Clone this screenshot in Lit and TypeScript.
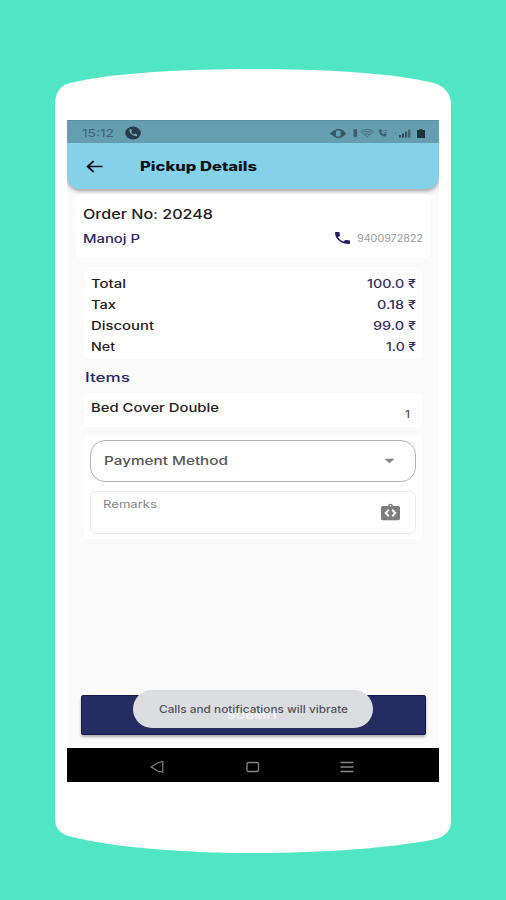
import { LitElement, html, svg, css } from "lit";
import { customElement, property } from "lit/decorators.js";

/** One line of text stretched to an exact width; its baseline sits 15px down a 20px line. */
@customElement("wide-text")
class WideText extends LitElement {
  @property() text = "";
  @property({ type: Number }) width = 100;
  static styles = css`
    :host { display: block; flex: none; }
    svg { display: block; overflow: visible; }
    text { fill: currentColor; }
  `;
  render() {
    return html`<svg width=${this.width} height="20">
      ${svg`<text x="0" y="15" textLength=${this.width} lengthAdjust="spacingAndGlyphs">${this.text}</text>`}
    </svg>`;
  }
}

@customElement("app-root")
class AppRoot extends LitElement {
  static styles = css`
    :host { display: block; width: 506px; height: 900px; background: #50e5c3; overflow: hidden;
      font-family: Inter, "Noto Sans", sans-serif; position: relative; }
    * { box-sizing: border-box; }
    svg { display: block; flex: none; }
    .frame { position: absolute; left: 0; top: 0; }
    .phone { position: relative; padding: 120px 67px 118px; height: 900px; }
    .screen { width: 372px; height: 662px; background: #fafafa; display: flex; flex-direction: column; }
    .bars { box-shadow: 0 2px 4px rgba(0,0,0,.38); border-radius: 0 0 13px 13px; overflow: hidden; background: #86d1ea; height: 69px; flex: none; clip-path: inset(0 0 -8px 0); }
    .status { height: 23px; background: #659eb1; border-top: 1px solid #5791a5; display: flex; padding-left: 15px; color: #41636f; font-size: 11px; }
    .status .clock { margin-top: 1px; }
    .status .call { margin: 4px 0 0 11px; }
    .status .icons { margin: 5px 0 0 189px; }
    .appbar { height: 46px; display: flex; padding: 13px 0 0 18px; color: #0a1216; font-size: 12.5px; font-weight: 800; }
    .appbar wide-text { margin: 0 0 0 35px; }
    .card { background: #fff; border-radius: 5px; flex: none; }
    .order { margin: 5px 8px 0 9px; height: 64px; padding: 10px 8px 0 7px; font-size: 13px; font-weight: 500; color: #202020; }
    .line { display: flex; justify-content: space-between; }
    .contact { margin-top: 4px; font-size: 11.5px; color: #27266a; }
    .tel { display: flex; }
    .tel svg { margin: 4px 7px 0 0; }
    .tel wide-text { font-size: 10px; font-weight: 400; color: #999; margin-top: -1px; }
    .totals { margin: 13px 16px 0 17px; height: 88px; padding: 2px 7px 0; }
    .totals .line { height: 20.9px; font-size: 11.5px; font-weight: 500; color: #222; }
    .totals .amount { color: #303066; }
    .items { margin: 8px 0 0 18px; font-size: 12.5px; font-weight: 500; color: #27266a; }
    .item { margin: 6px 17px 0 17px; height: 34px; padding: 4px 12px 0 7px; font-size: 12px; font-weight: 500; color: #222; }
    .item .qty { margin-top: 6px; font-size: 11px; color: #555; }
    .form { margin: 9px 16px 0 17px; height: 103px; padding: 4px 7px 0 6px; }
    .select { height: 42px; border: 1px solid #b3b3b3; border-radius: 15px; padding: 9px 20px 0 13px; font-size: 12px; font-weight: 500; color: #555; }
    .select svg { margin-top: 8px; }
    .remarks { margin-top: 9px; height: 43px; border: 1px solid #ececec; border-radius: 6px; padding: 1px 15px 0 12px; font-size: 10.5px; color: #858585; }
    .remarks svg { margin-top: 9px; }
    .foot { margin: auto 13px 13px 14px; position: relative; }
    .submit { height: 40px; background: #252c61; border: 1px solid #18194f; border-radius: 2px; box-shadow: 0 2px 3px rgba(0,0,0,.3); }
    .toast { position: absolute; left: 52px; top: -5px; width: 240px; height: 38px; border-radius: 19px; background: #dcdde1; }
    .message { position: absolute; left: 78px; top: 3px; color: #50535a; font-size: 10.5px; font-weight: 500; }
    .ghost { position: absolute; left: 146px; top: 9px; color: rgba(255,255,255,.7); font-size: 11px; font-weight: 700; }
    .nav { height: 34px; background: #000; display: flex; padding: 12px 0 0 83px; flex: none; }
    .nav .home { margin-left: 81px; }
    .nav .menu { margin-left: 80px; }
  `;

  private totals: [string, number, string, number][] = [
    ["Total", 35, "100.0 ₹", 49],
    ["Tax", 25, "0.18 ₹", 39],
    ["Discount", 63, "99.0 ₹", 43],
    ["Net", 24, "1.0 ₹", 30],
  ];

  render() {
    return html`
      <svg class="frame" width="506" height="900">
        <path fill="#fff" d="M55 104C55 94 59 86 70 83C112 73 182 69 253 69C324 69 392 73 434 83C446 87 451 95 451 105V821C451 830 446 836 436 839C392 848 324 853 253 853C182 853 112 847 72 837C60 834 55 829 55 818Z"/>
      </svg>
      <div class="phone"><div class="screen">
        <div class="bars">
          <div class="status">
            <wide-text class="clock" text="15:12" width="32"></wide-text>
            <svg class="call" width="16" height="16" viewBox="0 0 16 16">
              <ellipse cx="8" cy="8" rx="7.8" ry="6.4" fill="#263e49"/>
              <path d="M4.400 4.200l1.800-.2.900 2-.9 1c.6 1.100 1.500 1.900 2.700 2.400l1.100-.9 2.100.8-.1 1.700c-4 .6-8.200-3-7.600-6.800z" fill="#75a3b2"/>
            </svg>
            <svg class="icons" width="97" height="15" viewBox="0 0 97 15" fill="#2d4b56">
              <path d="M0 7.500L4 4.200h1.200L6.500 3h4L12 4.200h1.200L16 7.500L13.200 10.800H12L10.500 12h-4L5.200 10.800H4z" opacity=".85"/>
              <rect x="6" y="4.600" width="4.600" height="5.800" rx="1" fill="#659eb1"/>
              <rect x="23.500" y="3" width="3.600" height="8" rx="1" opacity=".75"/>
              <path d="M31 5.500C34 2.800 40.500 2.800 43.300 5.500L37.200 11zM33.500 5.800h7.500M35 8h4.500" fill="none" stroke="#3b616f" stroke-width="1" opacity=".75"/>
              <path d="M49 3.700l2.200-.2.800 2-.9.800c.5.900 1.200 1.500 2.200 1.900l1-.8 2 .9-.1 2c-4.500.3-7.700-2.800-7.200-6.600zM53.300 4.500h4.200M55.500 3.200v4M53.500 6.500h4" stroke="#3b616f" stroke-width=".6" opacity=".75"/>
              <rect x="64.500" y="6" width="1.500" height="2" opacity=".3"/>
              <rect x="69" y="9" width="2" height="2.500"/><rect x="72" y="7.500" width="2" height="4"/>
              <rect x="75" y="5.500" width="2.200" height="6" opacity=".85"/><rect x="78" y="3.500" width="2.500" height="8" opacity=".65"/>
              <path d="M87 4h2V3.200h3.500V4H95v8h-8z" fill="#1c3540"/>
            </svg>
          </div>
          <div class="appbar">
            <svg width="20" height="20" viewBox="0 0 20 20"><path d="M17.500 10.500H3M8.700 5L2.500 10.500L8.700 16" fill="none" stroke="#0a1216" stroke-width="1.700"/></svg>
            <wide-text text="Pickup Details" width="117"></wide-text>
          </div>
        </div>

        <div class="card order">
          <wide-text text="Order No: 20248" width="130"></wide-text>
          <div class="line contact">
            <wide-text text="Manoj P" width="57"></wide-text>
            <div class="tel">
              <svg width="15" height="12" viewBox="3 3 18 18" preserveAspectRatio="none"><path fill="#201f66" d="M6.620 10.790c1.440 2.830 3.760 5.140 6.590 6.590l2.200-2.200c.27-.27.67-.36 1.020-.24 1.120.37 2.330.57 3.570.57.55 0 1 .45 1 1V20c0 .55-.45 1-1 1-9.390 0-17-7.610-17-17 0-.55.45-1 1-1h3.500c.55 0 1 .45 1 1 0 1.250.2 2.450.57 3.570.11.35.03.74-.25 1.020z"/></svg>
              <wide-text text="9400972822" width="66"></wide-text>
            </div>
          </div>
        </div>

        <div class="card totals">
          ${this.totals.map(([name, w, amount, aw]) => html`<div class="line">
            <wide-text text=${name} .width=${w}></wide-text>
            <wide-text class="amount" text=${amount} .width=${aw}></wide-text>
          </div>`)}
        </div>

        <wide-text class="items" text="Items" width="45"></wide-text>

        <div class="card item line">
          <wide-text text="Bed Cover Double" width="128"></wide-text>
          <wide-text class="qty" text="1" width="5"></wide-text>
        </div>

        <div class="card form">
          <div class="select line">
            <wide-text text="Payment Method" width="124"></wide-text>
            <svg width="11" height="6" viewBox="0 0 11 6"><path d="M.5 .8h10L5.500 5.200z" fill="#858585"/></svg>
          </div>
          <div class="remarks line">
            <wide-text text="Remarks" width="54"></wide-text>
            <svg width="19" height="19" viewBox="0 0 19 19">
              <path d="M2 4h5c.3-3 4.700-3 5 0h5c1.200 0 2 .6 2 1.600v11c0 1-.8 1.600-2 1.600H2c-1.200 0-2-.6-2-1.600v-11C0 4.600.8 4 2 4z" fill="#7d7d7d"/>
              <circle cx="9.500" cy="3.800" r=".8" fill="#fff"/>
              <path d="M7.800 7.800L4.800 11l3 3.200M11.200 7.800l3 3.200l-3 3.200" fill="none" stroke="#fff" stroke-width="2"/>
            </svg>
          </div>
        </div>

        <div class="foot">
          <div class="submit"></div>
          <div class="toast"></div>
          <wide-text class="ghost" text="SUBMIT" width="52"></wide-text>
          <wide-text class="message" text="Calls and notifications will vibrate" width="189"></wide-text>
        </div>

        <div class="nav">
          <svg width="15" height="14" viewBox="0 0 15 14"><path d="M12.800 1.500v10.800L7.500 11L1.200 7L7.500 3z" fill="none" stroke="#858585" stroke-width="1.200"/></svg>
          <svg class="home" width="14" height="14" viewBox="0 0 14 14"><rect x="1" y="2.500" width="11.500" height="9" rx="1.500" fill="none" stroke="#858585" stroke-width="1.300"/></svg>
          <svg class="menu" width="14" height="14" viewBox="0 0 14 14"><path d="M.5 2.500h13M.5 7h13M.5 11.500h13" stroke="#858585" stroke-width="1.300"/></svg>
        </div>
      </div></div>`;
  }
}
